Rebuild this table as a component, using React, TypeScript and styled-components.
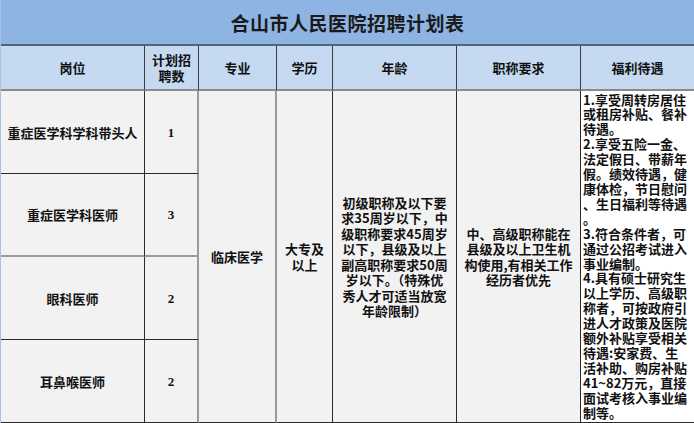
import styled, { createGlobalStyle } from 'styled-components';

const GlobalStyle = createGlobalStyle`
  html, body {
    margin: 0;
    padding: 0;
    background: #ffffff;
  }
  body {
    font-family: "Noto Sans CJK SC", "Liberation Serif", serif;
    color: #111;
  }
`;

const Sheet = styled.div`
  display: grid;
  grid-template-columns: 144px 54px 78px 56px 124px 124px 113px;
  grid-template-rows: 46px 45px repeat(4, 83px);
  width: 694px;
  border-left: 1px solid #a7c1e2;
  box-sizing: border-box;
`;

const Title = styled.div`
  grid-column: 1 / -1;
  display: flex;
  align-items: center;
  justify-content: center;
  background: #8db4e2;
  border-bottom: 2px solid #4e647f;
  font-size: 19px;
  font-weight: 700;
  letter-spacing: 0.5px;
  color: #1a1a1a;
`;

const Head = styled.div<{ $last?: boolean }>`
  display: flex;
  flex-direction: column;
  align-items: center;
  justify-content: center;
  background: #c5d9f1;
  border-right: ${p => (p.$last ? 'none' : '1px solid #3c3c3c')};
  border-bottom: 2px solid #8a8a8a;
  font-size: 13px;
  font-weight: 700;
  line-height: 16px;
  text-align: center;
`;

type Line = 'dark' | 'soft' | 'none';

const lineColor = (l?: Line) =>
  l === 'soft' ? '2px solid #9a9a9a' : l === 'none' ? 'none' : '1px solid #2a2a2a';

const Cell = styled.div<{ $rows?: number; $right?: Line; $bottom?: Line; $white?: boolean; $left?: boolean }>`
  grid-row: ${p => (p.$rows ? `span ${p.$rows}` : 'auto')};
  display: flex;
  flex-direction: column;
  justify-content: center;
  align-items: ${p => (p.$left ? 'flex-start' : 'center')};
  padding: ${p => (p.$left ? '0 0 0 2px' : '0 4px')};
  background: ${p => (p.$white ? '#ffffff' : '#f2f2f2')};
  border-right: ${p => lineColor(p.$right)};
  border-bottom: ${p => lineColor(p.$bottom)};
  box-sizing: border-box;
  font-size: 13px;
  font-weight: 700;
  line-height: 15px;
  text-align: ${p => (p.$left ? 'left' : 'center')};
  white-space: nowrap;
`;

const Num = styled.span`
  font-family: "Liberation Serif", serif;
  font-size: 13px;
  font-weight: 700;
`;

const TextLine = styled.span<{ $tight?: boolean }>`
  display: block;
  line-height: ${p => (p.$tight ? '14.9px' : '15.5px')};
`;

const jobs = [
  { name: '重症医学科学科带头人', count: 1 },
  { name: '重症医学科医师', count: 3 },
  { name: '眼科医师', count: 2 },
  { name: '耳鼻喉医师', count: 2 },
];

const ageLines = [
  '初级职称及以下要',
  '求35周岁以下，中',
  '级职称要求45周岁',
  '以下，县级及以上',
  '副高职称要求50周',
  '岁以下。（特殊优',
  '秀人才可适当放宽',
  '年龄限制）',
];

const rankLines = ['中、高级职称能在', '县级及以上卫生机', '构使用,有相关工作', '经历者优先'];

const welfareLines = [
  '1.享受周转房居住',
  '或租房补贴、餐补',
  '待遇。',
  '2.享受五险一金、',
  '法定假日、带薪年',
  '假。绩效待遇，健',
  '康体检，节日慰问',
  '、生日福利等待遇',
  '。',
  '3.符合条件者，可',
  '通过公招考试进入',
  '事业编制。',
  '4.具有硕士研究生',
  '以上学历、高级职',
  '称者，可按政府引',
  '进人才政策及医院',
  '额外补贴享受相关',
  '待遇:安家费、生',
  '活补助、购房补贴',
  '41~82万元，直接',
  '面试考核入事业编',
  '制等。',
];

export default function App() {
  return (
    <>
      <GlobalStyle />
      <Sheet>
        <Title>合山市人民医院招聘计划表</Title>

        <Head>岗位</Head>
        <Head>
          <span>计划招</span>
          <span>聘数</span>
        </Head>
        <Head>专业</Head>
        <Head>学历</Head>
        <Head>年龄</Head>
        <Head>职称要求</Head>
        <Head $last>福利待遇</Head>

        {jobs.map((job, i) => {
          const bottom: Line = i === jobs.length - 1 ? 'dark' : i === 1 ? 'soft' : 'dark';
          const cells = [
            <Cell key={`n${i}`} $bottom={bottom}>{job.name}</Cell>,
            <Cell key={`c${i}`} $right="soft" $bottom={bottom}>
              <Num>{job.count}</Num>
            </Cell>,
          ];
          if (i === 0) {
            cells.push(
              <Cell key="major" $rows={4} $right="soft">临床医学</Cell>,
              <Cell key="edu" $rows={4}>
                <TextLine>大专及</TextLine>
                <TextLine>以上</TextLine>
              </Cell>,
              <Cell key="age" $rows={4}>
                {ageLines.map(l => (
                  <TextLine key={l}>{l}</TextLine>
                ))}
              </Cell>,
              <Cell key="rank" $rows={4}>
                {rankLines.map(l => (
                  <TextLine key={l}>{l}</TextLine>
                ))}
              </Cell>,
              <Cell key="welfare" $rows={4} $right="none" $white $left>
                {welfareLines.map((l, k) => (
                  <TextLine key={k} $tight>{l}</TextLine>
                ))}
              </Cell>
            );
          }
          return cells;
        })}
      </Sheet>
    </>
  );
}
